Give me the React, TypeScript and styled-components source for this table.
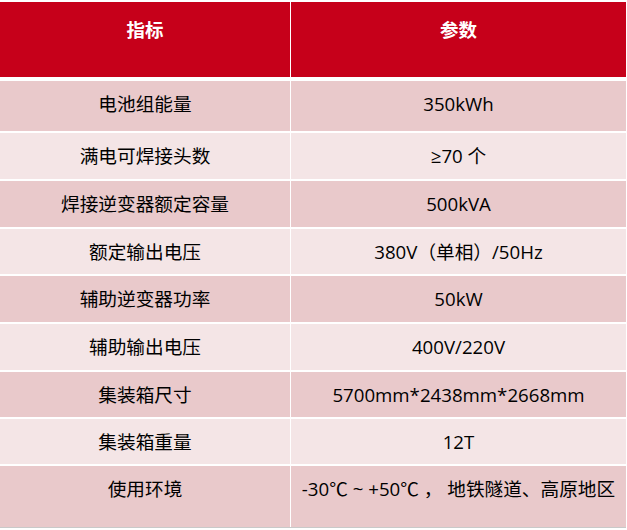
import styled, { createGlobalStyle } from 'styled-components';

const GlobalStyle = createGlobalStyle`
	html, body {
		margin: 0;
		padding: 0;
		background: #ffffff;
	}
	body {
		font-family: 'Open Sans', 'Noto Sans CJK SC', sans-serif;
		color: #000000;
	}
`;

const Page = styled.div`
	width: 627px;
	height: 530px;
	padding-top: 2px;
	box-sizing: border-box;
`;

const Table = styled.div`
	display: grid;
	grid-template-columns: 290px 335px;
	column-gap: 1px;
	row-gap: 2px;
	width: 626px;
	border-bottom: 1px solid #c9c9c9;
`;

const HeadCell = styled.div`
	height: 75px;
	margin-bottom: 2px;
	background: #c6001a;
	color: #ffffff;
	font-family: 'Noto Sans CJK SC', sans-serif;
	font-weight: 700;
	font-size: 18.5px;
	line-height: 26px;
	text-align: center;
	padding-top: 14px;
	box-sizing: border-box;
`;

const Cell = styled.div<{ $h: number; $shade: 'dark' | 'light' }>`
	height: ${(p) => p.$h}px;
	background: ${(p) => (p.$shade === 'dark' ? '#e9c9cb' : '#f4e5e6')};
	font-size: 18.67px;
	line-height: 26px;
	text-align: center;
	padding-top: 10px;
	box-sizing: border-box;
	white-space: nowrap;
`;

const rows: [string, string, number][] = [
	['电池组能量', '350kWh', 50],
	['满电可焊接头数', '≥70 个', 46],
	['焊接逆变器额定容量', '500kVA', 46],
	['额定输出电压', '380V（单相）/50Hz', 45],
	['辅助逆变器功率', '50kW', 46],
	['辅助输出电压', '400V/220V', 46],
	['集装箱尺寸', '5700mm*2438mm*2668mm', 45],
	['集装箱重量', '12T', 45],
	['使用环境', '-30℃ ~ +50℃ ， 地铁隧道、高原地区', 61],
];

export default function App() {
	return (
		<>
			<GlobalStyle />
			<Page>
				<Table>
					<HeadCell>指标</HeadCell>
					<HeadCell>参数</HeadCell>
					{rows.map(([name, value, h], i) => {
						const shade = i % 2 === 0 ? 'dark' : 'light';
						return [
							<Cell key={`n${i}`} $h={h} $shade={shade}>
								{name}
							</Cell>,
							<Cell key={`v${i}`} $h={h} $shade={shade}>
								{value}
							</Cell>,
						];
					})}
				</Table>
			</Page>
		</>
	);
}
